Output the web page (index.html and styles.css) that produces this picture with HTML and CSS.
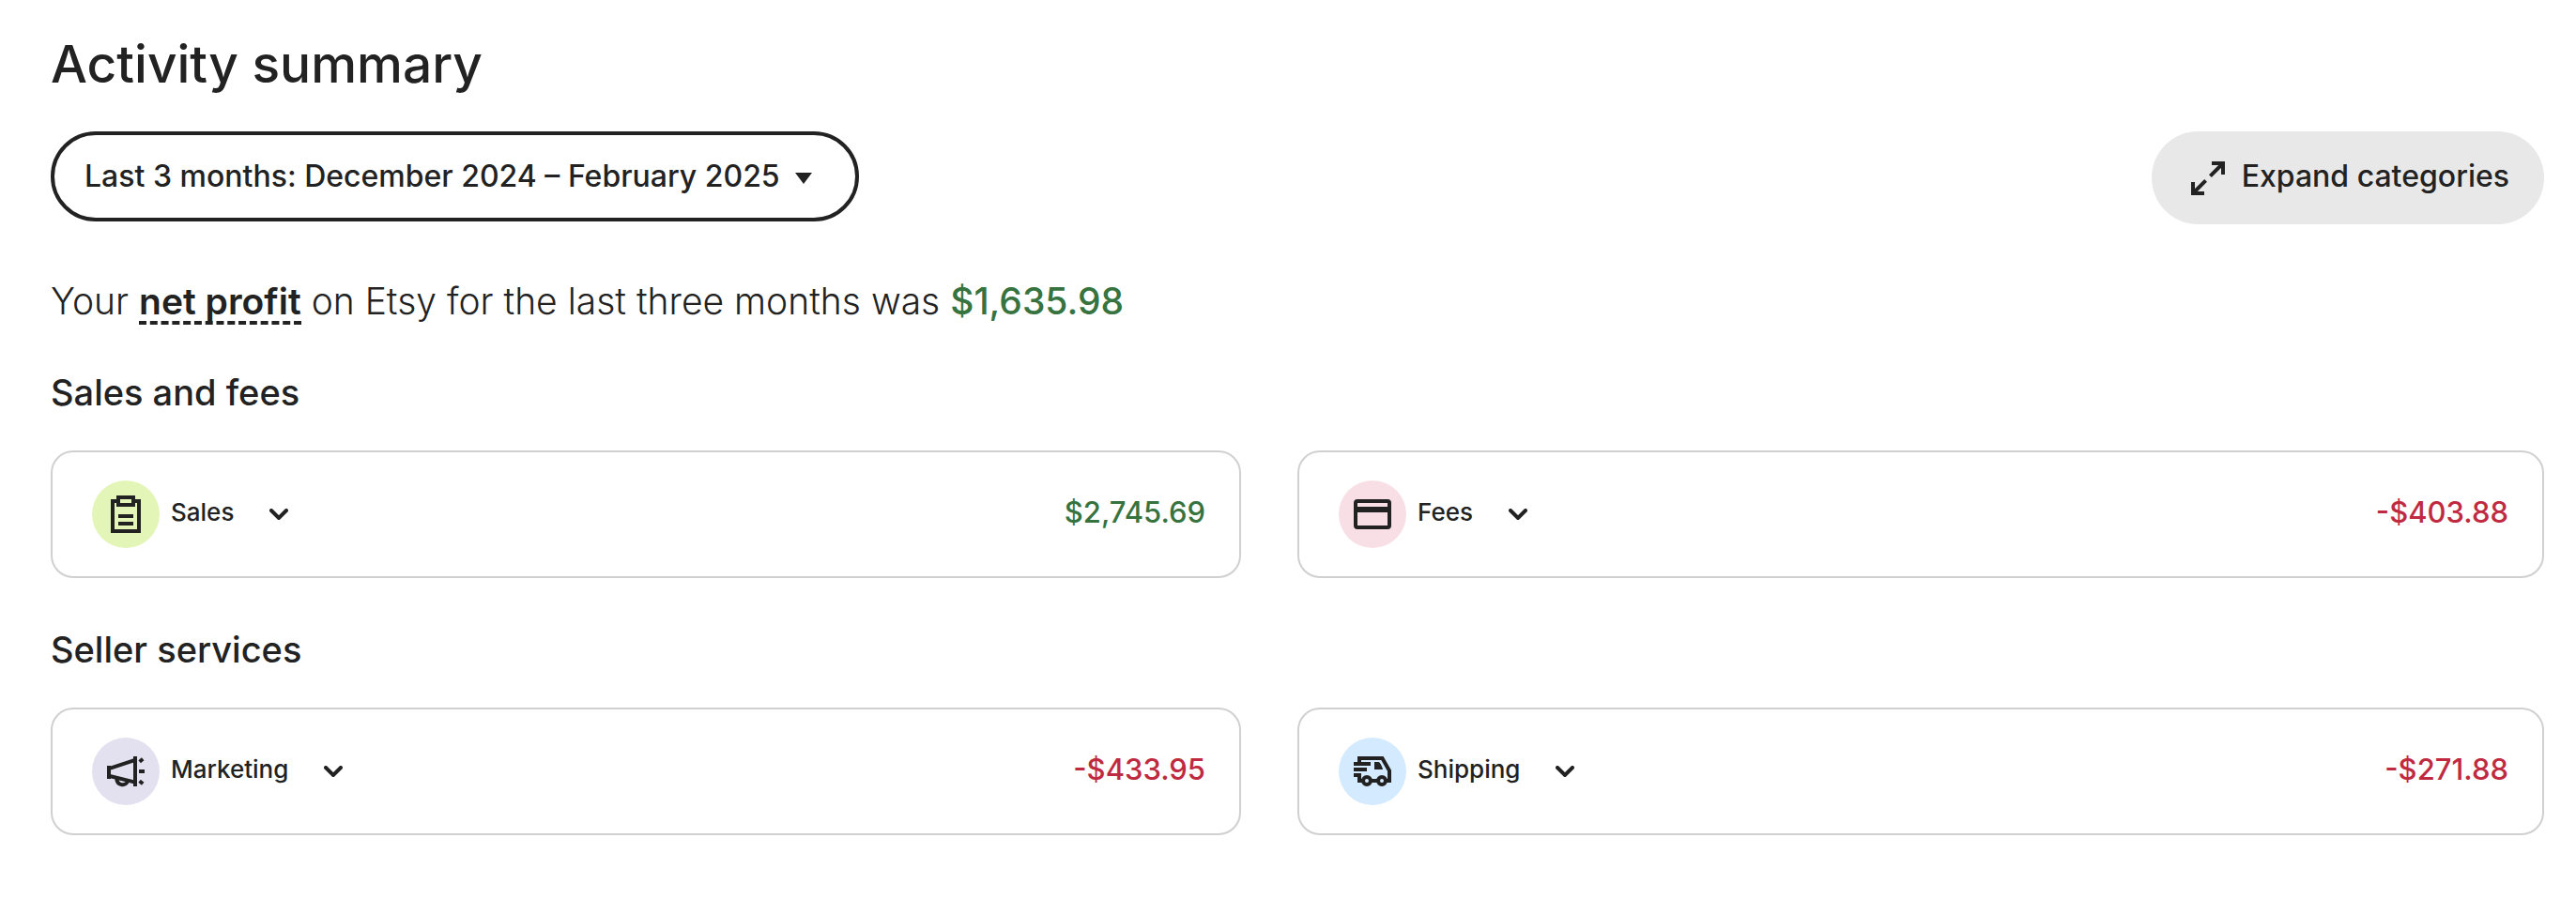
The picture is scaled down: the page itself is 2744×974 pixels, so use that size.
FILE: index.html
```html
<!DOCTYPE html>
<html lang="en">
<head>
    <meta charset="UTF-8">
    <meta name="viewport" content="width=device-width, initial-scale=1.0">
    <title>Activity summary</title>
    <link rel="stylesheet" href="styles.css">
</head>
<body>
    <main class="summary">
        <h1>Activity summary</h1>

        <!-- Period picker and expand button -->
        <div class="toolbar">
            <div class="period">
                <select class="period-select" aria-label="Time period">
                    <option>Last 3 months: December 2024 – February 2025</option>
                </select>
                <svg class="period-arrow" viewBox="0 0 18 12" aria-hidden="true"><path d="M0 0h18L9 12z"/></svg>
            </div>
            <button type="button" class="btn-expand">
                <svg class="icon" viewBox="0 0 24 24" aria-hidden="true">
                    <path d="M14 4h6v6M20 4l-6.8 6.8M10 20H4v-6M4 20l6.8-6.8"/>
                    <path class="fill" d="M16 3h5v5zM3 16v5h5z"/>
                </svg>
                <span class="btn-text">Expand categories</span>
            </button>
        </div>

        <p class="profit">Your <button type="button" class="profit-term">net profit</button> on Etsy for the last three months was <strong class="positive">$1,635.98</strong></p>

        <!-- Sales and fees -->
        <section>
            <h2>Sales and fees</h2>
            <div class="cards">
                <div class="card">
                    <button type="button" class="card-toggle" aria-expanded="false">
                        <span class="badge badge-sales">
                            <svg class="icon" viewBox="0 0 24 24" aria-hidden="true">
                                <path d="M8 5H5v16h14V5h-3M8 3h8v4H8zM8 13h8M8 17h8"/>
                            </svg>
                        </span>
                        <span class="card-label">Sales</span>
                        <svg class="chevron" viewBox="0 0 20 12" aria-hidden="true"><path d="M2 2l8 8 8-8"/></svg>
                    </button>
                    <span class="amount positive">$2,745.69</span>
                </div>
                <div class="card">
                    <button type="button" class="card-toggle" aria-expanded="false">
                        <span class="badge badge-fees">
                            <svg class="icon" viewBox="0 0 24 24" aria-hidden="true">
                                <rect x="3" y="5" width="18" height="14" rx="1"/>
                                <path class="fill" d="M3 8h18v3H3z"/>
                            </svg>
                        </span>
                        <span class="card-label">Fees</span>
                        <svg class="chevron" viewBox="0 0 20 12" aria-hidden="true"><path d="M2 2l8 8 8-8"/></svg>
                    </button>
                    <span class="amount negative">-$403.88</span>
                </div>
            </div>
        </section>

        <!-- Seller services -->
        <section>
            <h2>Seller services</h2>
            <div class="cards">
                <div class="card">
                    <button type="button" class="card-toggle" aria-expanded="false">
                        <span class="badge badge-marketing">
                            <svg class="icon" viewBox="0 0 24 24" aria-hidden="true">
                                <path d="M3 9v7M17 4v16M3 10.6l14-4.7M3 14.4l14 3.4M7 15.4c.4 4.8 5.6 4.6 6 1.4M19 12h3M19.3 6.9l1.8-1.5M19.3 17.1l1.8 1.5"/>
                            </svg>
                        </span>
                        <span class="card-label">Marketing</span>
                        <svg class="chevron" viewBox="0 0 20 12" aria-hidden="true"><path d="M2 2l8 8 8-8"/></svg>
                    </button>
                    <span class="amount negative">-$433.95</span>
                </div>
                <div class="card">
                    <button type="button" class="card-toggle" aria-expanded="false">
                        <span class="badge badge-shipping">
                            <svg class="icon" viewBox="0 0 24 24" aria-hidden="true">
                                <path d="M5 8V5h12.2L21 11.6V17h-1.5M2 8h9M2 11h7M2 14h4M5 14v3h1.5M11.5 17h3"/>
                                <circle cx="9" cy="17" r="2"/>
                                <circle cx="17" cy="17" r="2"/>
                                <path class="fill" d="M13 7h2.2c.8 0 2 2.6 2.3 4H13z"/>
                            </svg>
                        </span>
                        <span class="card-label">Shipping</span>
                        <svg class="chevron" viewBox="0 0 20 12" aria-hidden="true"><path d="M2 2l8 8 8-8"/></svg>
                    </button>
                    <span class="amount negative">-$271.88</span>
                </div>
            </div>
        </section>
    </main>
</body>
</html>
```
FILE: styles.css
```css
* {
    box-sizing: border-box;
}

body {
    margin: 0;
    background: #fff;
    color: #222;
    font-family: Inter, "Liberation Sans", sans-serif;
}

button, select {
    font: inherit;
    color: inherit;
    cursor: pointer;
}

.summary {
    padding: 36px 34px 84px 54px;
}

h1 {
    margin: 0 0 40px;
    font-size: 55px;
    line-height: 64px;
    font-weight: 500;
}

h2 {
    margin: 0 0 38px;
    font-size: 38px;
    line-height: 48px;
    font-weight: 500;
}

section + section {
    margin-top: 52px;
}

/* Toolbar */
.toolbar {
    display: flex;
    justify-content: space-between;
    align-items: flex-start;
    margin-bottom: 54px;
}

.period {
    position: relative;
}

.period-select {
    appearance: none;
    padding: 20px 80px 20px 32px;
    border: 4px solid #222;
    border-radius: 48px;
    background: #fff;
    font-size: 32px;
    line-height: 48px;
    font-weight: 500;
}

.period-arrow {
    position: absolute;
    top: 44px;
    right: 50px;
    width: 18px;
    height: 12px;
    fill: #222;
    pointer-events: none;
}

.btn-expand {
    display: flex;
    align-items: center;
    gap: 12px;
    padding: 26px 37px 25px 36px;
    border: none;
    border-radius: 50px;
    background: #e8e8e8;
    font-size: 32px;
    line-height: 48px;
    font-weight: 500;
}

.btn-text {
    padding-bottom: 4px;
    line-height: 44px;
}

.icon {
    display: block;
    width: 48px;
    height: 48px;
    fill: none;
    stroke: #222;
    stroke-width: 2;
}

.icon .fill {
    fill: #222;
    stroke: none;
}

/* Net profit line */
.profit {
    margin: 0 0 45px;
    font-size: 39px;
    line-height: 56px;
    font-weight: 300;
}

.profit-term {
    padding: 0;
    border: none;
    border-bottom: 4px dashed #222;
    background: none;
    line-height: 42px;
    font-weight: 600;
}

.profit strong {
    font-weight: 500;
}

.positive {
    color: #37733f;
}

.negative {
    color: #bf2a40;
}

/* Cards */
.cards {
    display: grid;
    grid-template-columns: 1fr 1fr;
}

.card {
    display: flex;
    justify-content: space-between;
    align-items: center;
    padding: 30px 36px 30px 42px;
    border: 2px solid #d0d0d0;
    border-radius: 24px;
}

.card:first-child {
    margin-right: 60px;
}

.card-toggle {
    display: flex;
    align-items: center;
    padding: 0;
    border: none;
    background: none;
}

.badge {
    padding: 12px;
    border-radius: 50%;
}

.badge-sales {
    background: #e3f5b7;
}

.badge-fees {
    background: #f8dfe6;
}

.badge-marketing {
    background: #e3e1ef;
}

.badge-shipping {
    background: #d4eafe;
}

.card-label {
    margin: 0 38px 0 12px;
    padding-bottom: 5px;
    font-size: 26px;
    line-height: 32px;
    font-weight: 500;
}

.chevron {
    width: 20px;
    height: 12px;
    fill: none;
    stroke: #222;
    stroke-width: 4;
    stroke-linecap: round;
}

.amount {
    padding-bottom: 5px;
    font-size: 31px;
    line-height: 40px;
    font-weight: 500;
}
```
